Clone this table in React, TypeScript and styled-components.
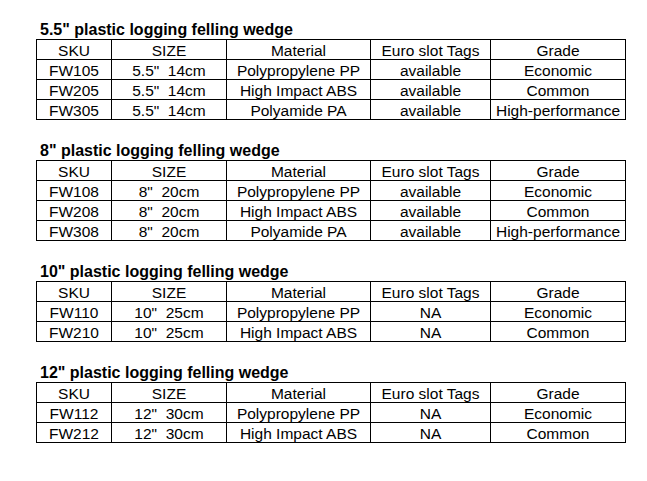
import React from 'react';
import styled, { createGlobalStyle } from 'styled-components';

type Row = [string, string, string, string, string]

type SpecTable = {
	title: string
	rows: Row[]
}

const header: Row = ['SKU', 'SIZE', 'Material', 'Euro slot Tags', 'Grade']

const tables: SpecTable[] = [
	{
		title: '5.5" plastic logging felling wedge',
		rows: [
			['FW105', '5.5"  14cm', 'Polypropylene PP', 'available', 'Economic'],
			['FW205', '5.5"  14cm', 'High Impact ABS', 'available', 'Common'],
			['FW305', '5.5"  14cm', 'Polyamide PA', 'available', 'High-performance'],
		],
	},
	{
		title: '8" plastic logging felling wedge',
		rows: [
			['FW108', '8"  20cm', 'Polypropylene PP', 'available', 'Economic'],
			['FW208', '8"  20cm', 'High Impact ABS', 'available', 'Common'],
			['FW308', '8"  20cm', 'Polyamide PA', 'available', 'High-performance'],
		],
	},
	{
		title: '10" plastic logging felling wedge',
		rows: [
			['FW110', '10"  25cm', 'Polypropylene PP', 'NA', 'Economic'],
			['FW210', '10"  25cm', 'High Impact ABS', 'NA', 'Common'],
		],
	},
	{
		title: '12" plastic logging felling wedge',
		rows: [
			['FW112', '12"  30cm', 'Polypropylene PP', 'NA', 'Economic'],
			['FW212', '12"  30cm', 'High Impact ABS', 'NA', 'Common'],
		],
	},
]

const GlobalStyle = createGlobalStyle`
	body {
		margin: 0;
		background: #fff;
		font-family: "Liberation Sans", Arial, sans-serif;
	}
`

const App = () => {
	return (
		<>
			<GlobalStyle />
			<Page>
				{tables.map((t) => (
					<Section key={t.title}>
						<Title>{t.title}</Title>
						<Table>
							{[header, ...t.rows].map((r, i) => (
								<TableRow key={i}>
									{r.map((c, j) => (
										<Cell key={j}>{c}</Cell>
									))}
								</TableRow>
							))}
						</Table>
					</Section>
				))}
			</Page>
		</>
	);
};

export default App;

const Page = styled.div`
	display: flex;
	flex-direction: column;
	gap: 22px;
	padding: 21px 0 0 36px;
`

const Section = styled.section`
	display: flex;
	flex-direction: column;
`

const Title = styled.h3`
	margin: 0;
	padding-left: 4px;
	height: 18px;
	line-height: 18px;
	font-size: 16px;
	font-weight: 700;
	color: #000;
	white-space: pre;
`

const Table = styled.div`
	width: 590px;
	border-top: 1px solid #000;
	border-left: 1px solid #000;
	box-sizing: border-box;
`

const TableRow = styled.div`
	display: grid;
	grid-template-columns: 75px 115px 144px 120px 135px;
	height: 20px;
`

const Cell = styled.div`
	box-sizing: border-box;
	border-right: 1px solid #000;
	border-bottom: 1px solid #000;
	text-align: center;
	font-size: 15.5px;
	line-height: 19px;
	padding-top: 1px;
	color: #000;
	white-space: pre;
	overflow: hidden;
`
